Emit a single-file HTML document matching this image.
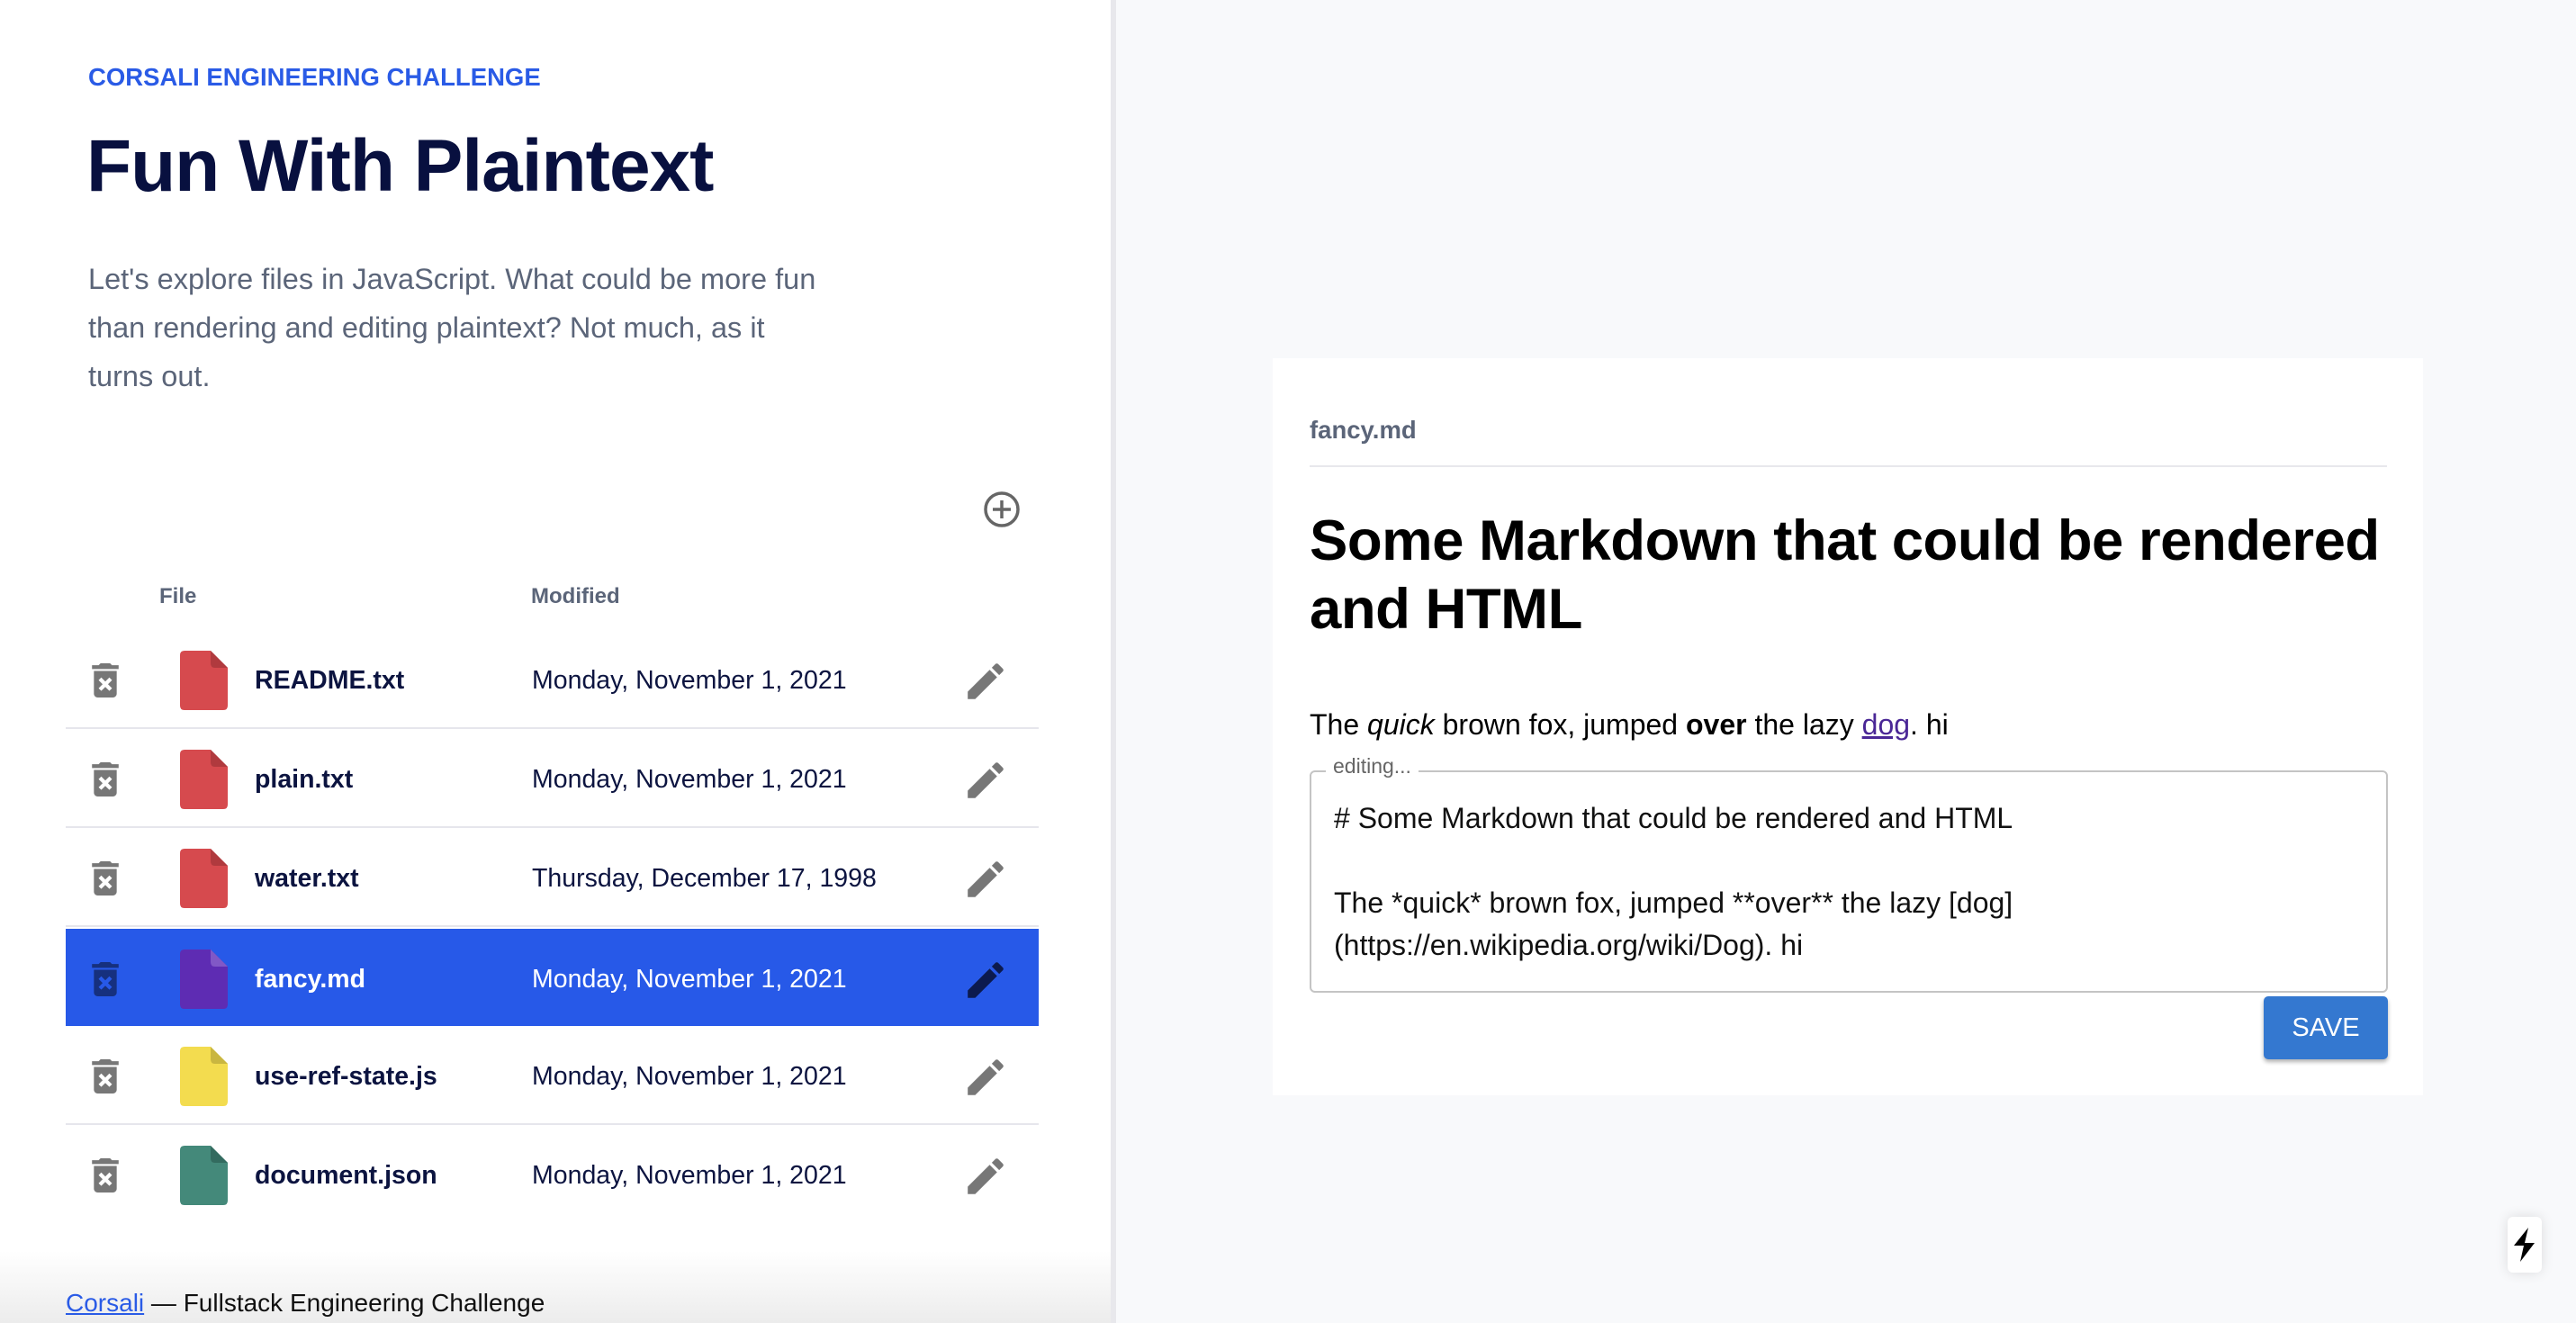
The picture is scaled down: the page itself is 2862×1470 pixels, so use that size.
<!DOCTYPE html>
<html><head><meta charset="utf-8"><style>
*{margin:0;padding:0;box-sizing:border-box}
body{width:2862px;height:1470px;overflow:hidden;font-family:"Liberation Sans",sans-serif;background:#f8f9fb;position:relative}
.left{position:absolute;left:0;top:0;width:1234px;height:1470px;background:#fff}
.div{position:absolute;left:1234px;top:0;width:6px;height:1470px;background:#e8e8ec}
.a{position:absolute;white-space:nowrap}
.row{position:absolute;left:73px;width:1081px;height:110px;border-bottom:2px solid #e6e6ec}
.row .t{position:absolute;left:102px;top:37px;width:30px;height:38px}
.row .f{position:absolute;left:127px;top:23px}
.row .n{position:absolute;left:210px;top:2px;line-height:108px;font-size:28.5px;font-weight:bold;color:#0c1440}
.row .d{position:absolute;left:518px;top:2px;line-height:108px;font-size:28.5px;color:#0c1440}
.row .p{position:absolute;left:1000px;top:35px;width:44px;height:44px}
.sel{background:#2759e8;border-bottom:none}
.sel .n,.sel .d{color:#fff}
</style></head><body>
<div class="left"></div>
<div class="div"></div>
<div class="a" style="left:98px;top:70px;font-size:27.5px;font-weight:bold;color:#2a5be6">CORSALI ENGINEERING CHALLENGE</div>
<div class="a" style="left:96px;top:138px;font-size:82px;font-weight:bold;color:#08103f;letter-spacing:-1px">Fun With Plaintext</div>
<div class="a" style="left:98px;top:283px;font-size:32.5px;line-height:54px;color:#5b6579;white-space:normal;width:815px">Let's explore files in JavaScript. What could be more fun than rendering and editing plaintext? Not much, as it turns out.</div>
<svg class="a" style="left:1092px;top:545px" width="42" height="42" viewBox="0 0 42 42"><circle cx="21" cy="21" r="18" fill="none" stroke="#666" stroke-width="3.5"/><path d="M21 11v20M11 21h20" stroke="#666" stroke-width="3.5"/></svg>
<div class="a" style="left:177px;top:649px;font-size:24px;font-weight:bold;color:#5b6579">File</div>
<div class="a" style="left:590px;top:649px;font-size:24px;font-weight:bold;color:#5b6579">Modified</div>

<div class="row" style="top:700px"><svg class="t" viewBox="5 3 14 18" style="left:29px"><path fill="#777" d="M6 19c0 1.1.9 2 2 2h8c1.1 0 2-.9 2-2V7H6v12zm2.46-7.12 1.41-1.41L12 12.59l2.12-2.12 1.41 1.41L13.41 14l2.12 2.12-1.41 1.41L12 15.41l-2.12 2.12-1.41-1.41L10.59 14l-2.13-2.12zM15.5 4l-1-1h-5l-1 1H5v2h14V4z"/></svg><svg class="f" width="53" height="66" viewBox="0 0 53 66"><path d="M5 0H34L53 19V61Q53 66 48 66H5Q0 66 0 61V5Q0 0 5 0Z" fill="#d64a4e"/><path d="M34 0V14Q34 19 39 19H53Z" fill="#b03a3e"/></svg><div class="n">README.txt</div><div class="d">Monday, November 1, 2021</div><svg class="p" viewBox="2 2 20 20"><path fill="#777" d="M3 17.25V21h3.75L17.81 9.94l-3.75-3.75L3 17.25zM20.71 7.04a1 1 0 0 0 0-1.41l-2.34-2.34a1 1 0 0 0-1.41 0l-1.83 1.83 3.75 3.75 1.83-1.83z"/></svg></div>

<div class="row" style="top:810px"><svg class="t" viewBox="5 3 14 18" style="left:29px"><path fill="#777" d="M6 19c0 1.1.9 2 2 2h8c1.1 0 2-.9 2-2V7H6v12zm2.46-7.12 1.41-1.41L12 12.59l2.12-2.12 1.41 1.41L13.41 14l2.12 2.12-1.41 1.41L12 15.41l-2.12 2.12-1.41-1.41L10.59 14l-2.13-2.12zM15.5 4l-1-1h-5l-1 1H5v2h14V4z"/></svg><svg class="f" width="53" height="66" viewBox="0 0 53 66"><path d="M5 0H34L53 19V61Q53 66 48 66H5Q0 66 0 61V5Q0 0 5 0Z" fill="#d64a4e"/><path d="M34 0V14Q34 19 39 19H53Z" fill="#b03a3e"/></svg><div class="n">plain.txt</div><div class="d">Monday, November 1, 2021</div><svg class="p" viewBox="2 2 20 20"><path fill="#777" d="M3 17.25V21h3.75L17.81 9.94l-3.75-3.75L3 17.25zM20.71 7.04a1 1 0 0 0 0-1.41l-2.34-2.34a1 1 0 0 0-1.41 0l-1.83 1.83 3.75 3.75 1.83-1.83z"/></svg></div>

<div class="row" style="top:920px"><svg class="t" viewBox="5 3 14 18" style="left:29px"><path fill="#777" d="M6 19c0 1.1.9 2 2 2h8c1.1 0 2-.9 2-2V7H6v12zm2.46-7.12 1.41-1.41L12 12.59l2.12-2.12 1.41 1.41L13.41 14l2.12 2.12-1.41 1.41L12 15.41l-2.12 2.12-1.41-1.41L10.59 14l-2.13-2.12zM15.5 4l-1-1h-5l-1 1H5v2h14V4z"/></svg><svg class="f" width="53" height="66" viewBox="0 0 53 66"><path d="M5 0H34L53 19V61Q53 66 48 66H5Q0 66 0 61V5Q0 0 5 0Z" fill="#d64a4e"/><path d="M34 0V14Q34 19 39 19H53Z" fill="#b03a3e"/></svg><div class="n">water.txt</div><div class="d">Thursday, December 17, 1998</div><svg class="p" viewBox="2 2 20 20"><path fill="#777" d="M3 17.25V21h3.75L17.81 9.94l-3.75-3.75L3 17.25zM20.71 7.04a1 1 0 0 0 0-1.41l-2.34-2.34a1 1 0 0 0-1.41 0l-1.83 1.83 3.75 3.75 1.83-1.83z"/></svg></div>

<div class="row sel" style="top:1032px;height:108px"><svg class="t" viewBox="5 3 14 18" style="left:29px"><path fill="#16307e" d="M6 19c0 1.1.9 2 2 2h8c1.1 0 2-.9 2-2V7H6v12zm2.46-7.12 1.41-1.41L12 12.59l2.12-2.12 1.41 1.41L13.41 14l2.12 2.12-1.41 1.41L12 15.41l-2.12 2.12-1.41-1.41L10.59 14l-2.13-2.12zM15.5 4l-1-1h-5l-1 1H5v2h14V4z"/></svg><svg class="f" width="53" height="66" viewBox="0 0 53 66"><path d="M5 0H34L53 19V61Q53 66 48 66H5Q0 66 0 61V5Q0 0 5 0Z" fill="#5e2cb3"/><path d="M34 0V14Q34 19 39 19H53Z" fill="#8158c6"/></svg><div class="n">fancy.md</div><div class="d">Monday, November 1, 2021</div><svg class="p" viewBox="2 2 20 20"><path fill="#0c1a4e" d="M3 17.25V21h3.75L17.81 9.94l-3.75-3.75L3 17.25zM20.71 7.04a1 1 0 0 0 0-1.41l-2.34-2.34a1 1 0 0 0-1.41 0l-1.83 1.83 3.75 3.75 1.83-1.83z"/></svg></div>

<div class="row" style="top:1140px"><svg class="t" viewBox="5 3 14 18" style="left:29px"><path fill="#777" d="M6 19c0 1.1.9 2 2 2h8c1.1 0 2-.9 2-2V7H6v12zm2.46-7.12 1.41-1.41L12 12.59l2.12-2.12 1.41 1.41L13.41 14l2.12 2.12-1.41 1.41L12 15.41l-2.12 2.12-1.41-1.41L10.59 14l-2.13-2.12zM15.5 4l-1-1h-5l-1 1H5v2h14V4z"/></svg><svg class="f" width="53" height="66" viewBox="0 0 53 66"><path d="M5 0H34L53 19V61Q53 66 48 66H5Q0 66 0 61V5Q0 0 5 0Z" fill="#f3dc4f"/><path d="M34 0V14Q34 19 39 19H53Z" fill="#c9b640"/></svg><div class="n">use-ref-state.js</div><div class="d">Monday, November 1, 2021</div><svg class="p" viewBox="2 2 20 20"><path fill="#777" d="M3 17.25V21h3.75L17.81 9.94l-3.75-3.75L3 17.25zM20.71 7.04a1 1 0 0 0 0-1.41l-2.34-2.34a1 1 0 0 0-1.41 0l-1.83 1.83 3.75 3.75 1.83-1.83z"/></svg></div>

<div class="row" style="top:1250px;border-bottom:none"><svg class="t" viewBox="5 3 14 18" style="left:29px"><path fill="#777" d="M6 19c0 1.1.9 2 2 2h8c1.1 0 2-.9 2-2V7H6v12zm2.46-7.12 1.41-1.41L12 12.59l2.12-2.12 1.41 1.41L13.41 14l2.12 2.12-1.41 1.41L12 15.41l-2.12 2.12-1.41-1.41L10.59 14l-2.13-2.12zM15.5 4l-1-1h-5l-1 1H5v2h14V4z"/></svg><svg class="f" width="53" height="66" viewBox="0 0 53 66"><path d="M5 0H34L53 19V61Q53 66 48 66H5Q0 66 0 61V5Q0 0 5 0Z" fill="#44897a"/><path d="M34 0V14Q34 19 39 19H53Z" fill="#336b5f"/></svg><div class="n">document.json</div><div class="d">Monday, November 1, 2021</div><svg class="p" viewBox="2 2 20 20"><path fill="#777" d="M3 17.25V21h3.75L17.81 9.94l-3.75-3.75L3 17.25zM20.71 7.04a1 1 0 0 0 0-1.41l-2.34-2.34a1 1 0 0 0-1.41 0l-1.83 1.83 3.75 3.75 1.83-1.83z"/></svg></div>

<div class="a" style="left:0;top:1390px;width:1234px;height:80px;background:linear-gradient(#fff,#ececec)"></div>
<div class="a" style="left:73px;top:1432px;font-size:28px;color:#111"><span style="color:#2a5be6;text-decoration:underline">Corsali</span> — Fullstack Engineering Challenge</div>

<div class="a" style="left:1414px;top:398px;width:1278px;height:819px;background:#fff"></div>
<div class="a" style="left:1455px;top:462px;font-size:27.5px;font-weight:bold;color:#5b6579">fancy.md</div>
<div class="a" style="left:1455px;top:517px;width:1197px;height:2px;background:#e8e8ec"></div>
<div class="a" style="left:1455px;top:563px;font-size:63.5px;line-height:76px;font-weight:bold;color:#000;white-space:normal;width:1230px;letter-spacing:-0.5px">Some Markdown that could be rendered and HTML</div>
<div class="a" style="left:1455px;top:787px;font-size:32px;color:#000">The <i>quick</i> brown fox, jumped <b>over</b> the lazy <span style="color:#4a2796;text-decoration:underline">dog</span>. hi</div>
<div class="a" style="left:1455px;top:856px;width:1198px;height:247px;border:2px solid #c4c4c4;border-radius:6px"></div>
<div class="a" style="left:1473px;top:838px;font-size:23px;color:#666;background:#fff;padding:0 8px">editing...</div>
<div class="a" style="left:1482px;top:886px;font-size:32px;line-height:47px;color:#111">#&nbsp;Some Markdown that could be rendered and HTML<br><br>The *quick* brown fox, jumped **over** the lazy [dog]<br>(https://en.wikipedia.org/wiki/Dog). hi</div>
<div class="a" style="left:2515px;top:1107px;width:138px;height:70px;background:#3478d0;border-radius:5px;box-shadow:0 3px 5px rgba(0,0,0,.3);color:#fff;font-size:29px;text-align:center;line-height:70px">SAVE</div>

<div class="a" style="left:2786px;top:1352px;width:38px;height:62px;background:#fff;border-radius:6px;box-shadow:0 0 14px rgba(0,0,0,.12)"></div>
<svg class="a" style="left:2792px;top:1364px" width="26" height="38" viewBox="0 0 26 38"><path d="M17 0L1 20H12L8 38L24 17H13Z" fill="#000"/></svg>
</body></html>
